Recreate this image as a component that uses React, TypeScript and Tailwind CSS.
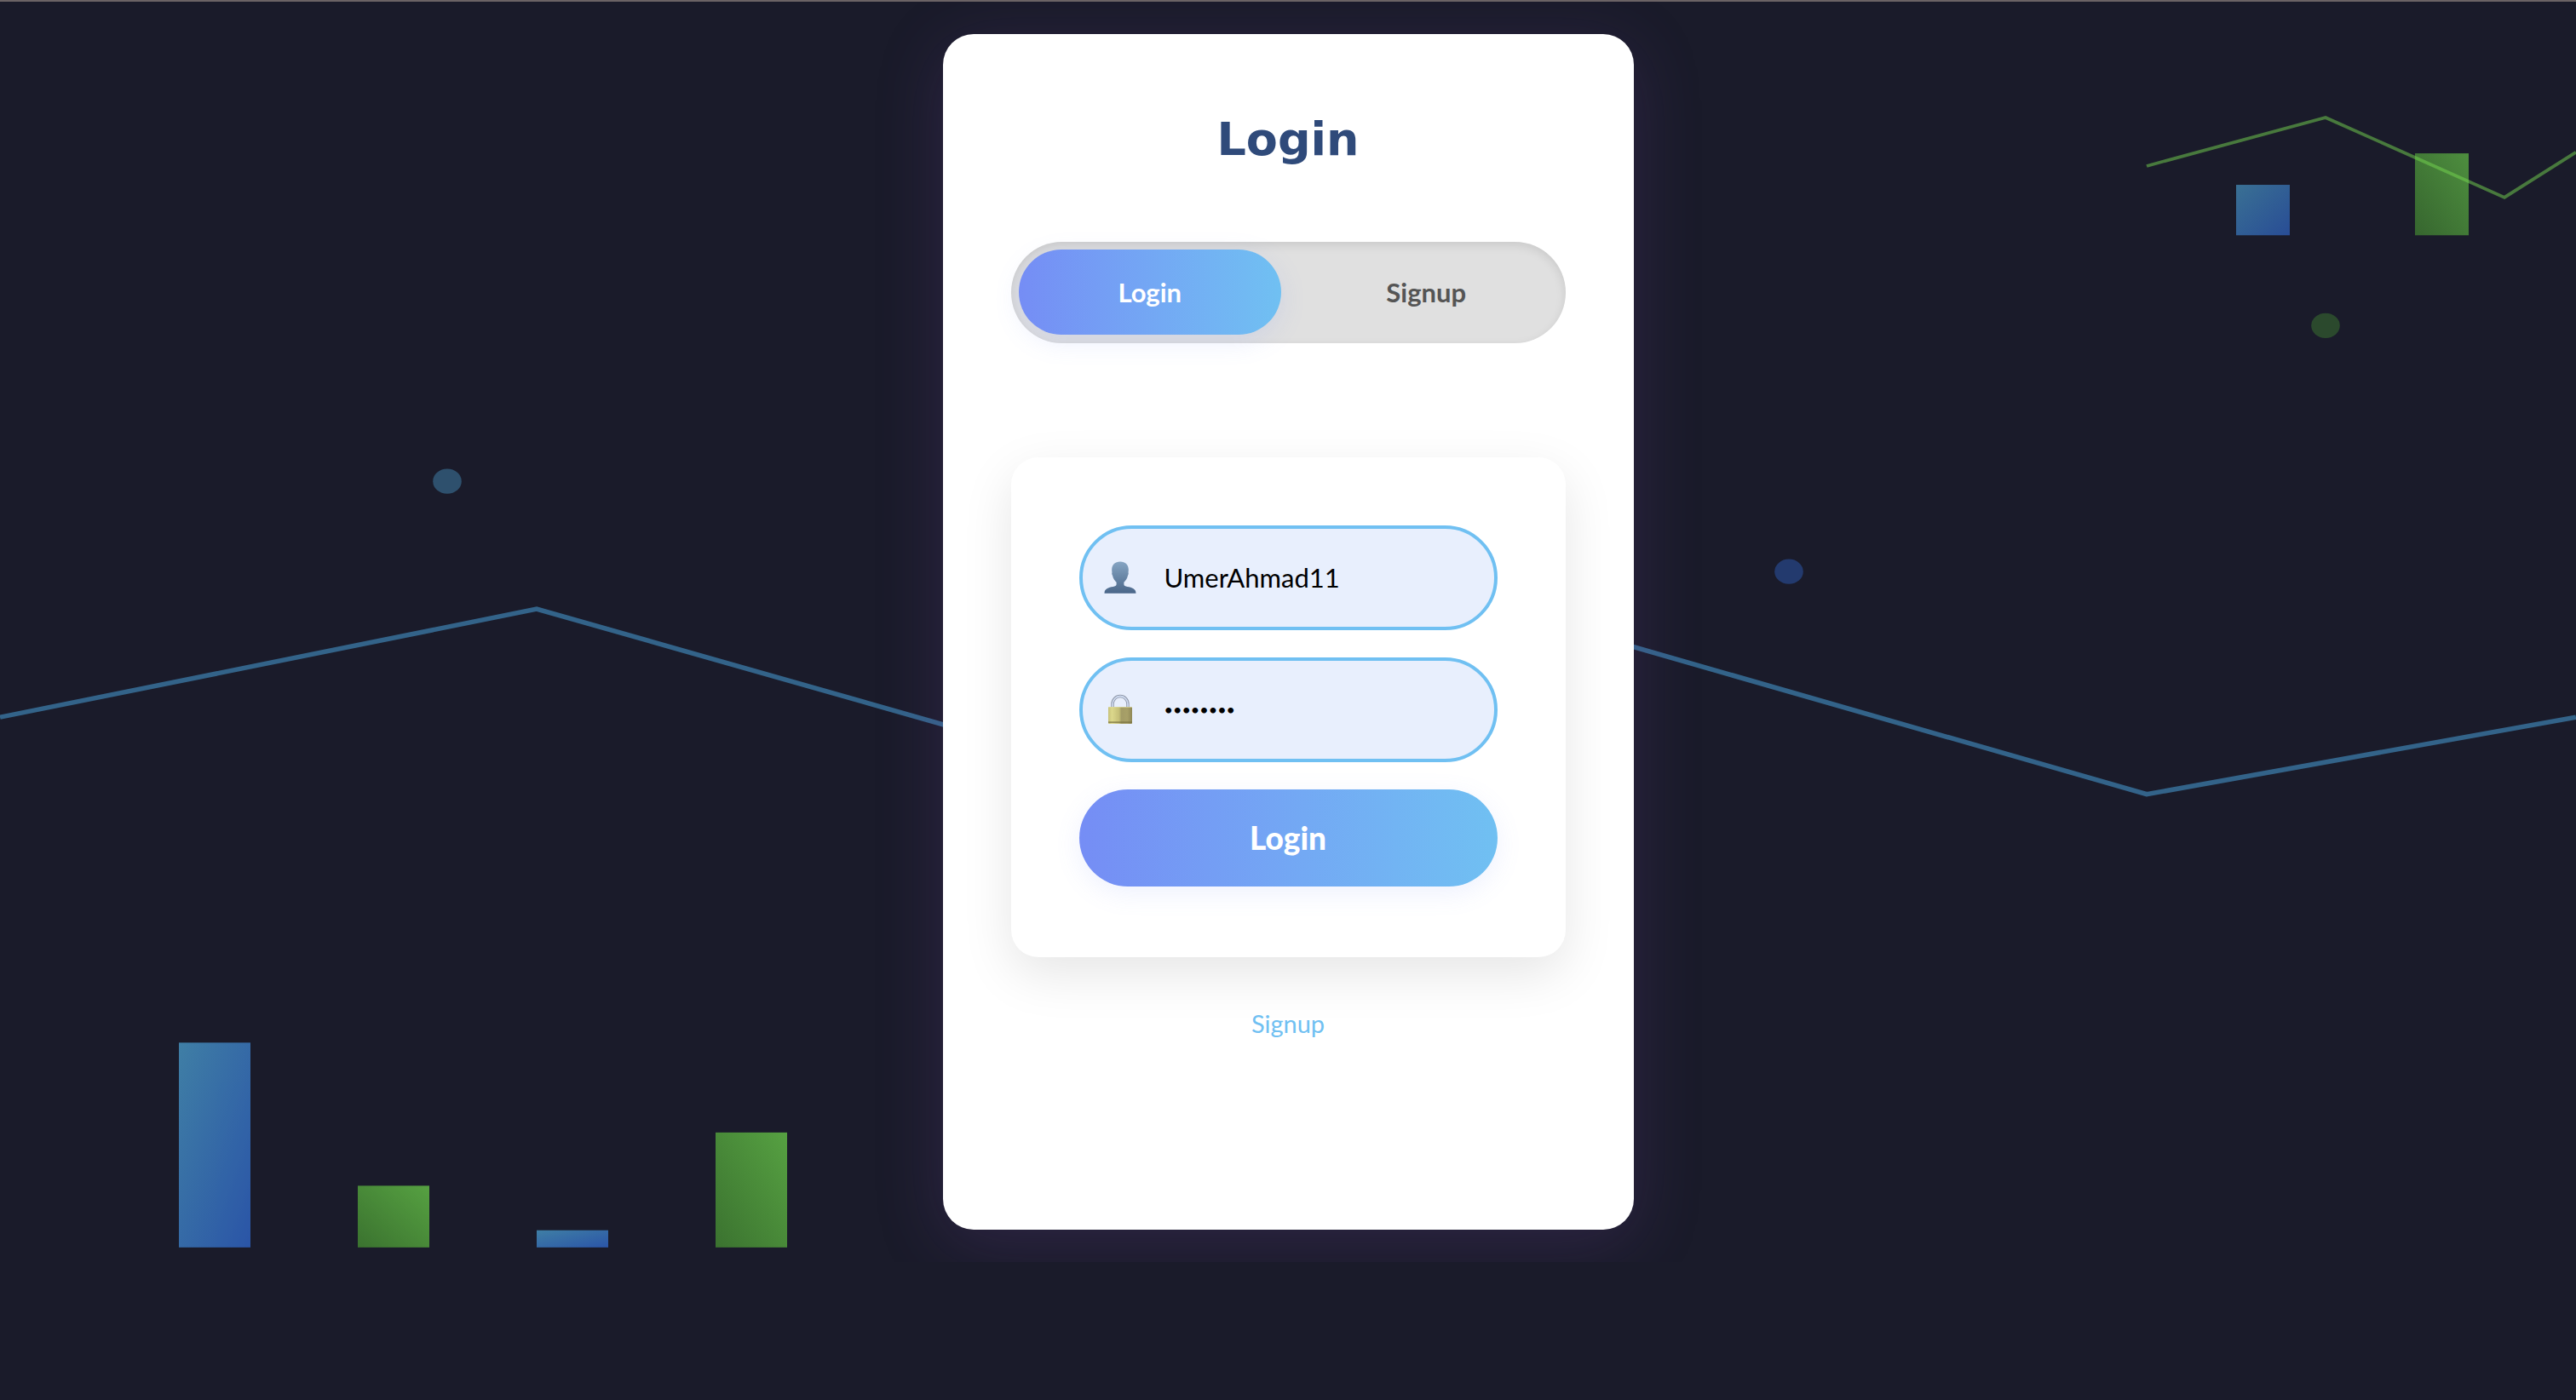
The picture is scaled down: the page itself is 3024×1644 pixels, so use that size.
import { useState } from "react";

const tabs = ["Login", "Signup"];

function Backdrop() {
  return (
    <svg
      className="absolute inset-0 h-full w-full"
      viewBox="0 0 1440 898"
      preserveAspectRatio="none"
      aria-hidden="true"
    >
      <defs>
        <linearGradient id="blueBar" x1="0" y1="0" x2="1" y2="1">
          <stop offset="0" stopColor="#4fa9da" />
          <stop offset="1" stopColor="#326edd" />
        </linearGradient>
        <linearGradient id="greenBar" x1="0" y1="1" x2="1" y2="0">
          <stop offset="0" stopColor="#499832" />
          <stop offset="1" stopColor="#70da4c" />
        </linearGradient>
      </defs>
      <g opacity="0.7">
        <rect x="100" y="668.5" width="40" height="131.5" fill="url(#blueBar)" />
        <rect x="200" y="760.4" width="40" height="39.6" fill="url(#greenBar)" />
        <rect x="300" y="789" width="40" height="11" fill="url(#blueBar)" />
        <rect x="400" y="726.2" width="40" height="73.8" fill="url(#greenBar)" />
      </g>
      <g opacity="0.6">
        <rect x="1250" y="117.6" width="30" height="32.4" fill="url(#blueBar)" />
        <rect x="1350" y="97.4" width="30" height="52.6" fill="url(#greenBar)" />
      </g>
      <path
        d="M0 459.5 L300 390 L600 488 L900 410 L1200 509 L1440 459.5"
        fill="none"
        stroke="#4cabe8"
        strokeWidth="3"
        opacity="0.5"
      />
      <path
        d="M1200 105.5 L1300 74.4 L1400 125.7 L1440 96.6"
        fill="none"
        stroke="#76d74f"
        strokeWidth="2"
        opacity="0.5"
      />
      <circle cx="250" cy="308" r="8" fill="#4fa9da" opacity="0.38" />
      <circle cx="1000" cy="366" r="8" fill="#326edd" opacity="0.38" />
      <circle cx="1300" cy="208" r="8" fill="#469631" opacity="0.38" />
    </svg>
  );
}

function UserIcon() {
  return (
    <svg className="h-10 w-10" viewBox="0 0 40 40" aria-hidden="true">
      <defs>
        <linearGradient id="bust" x1="0" y1="0" x2="0" y2="1">
          <stop offset="0" stopColor="#86a5c3" />
          <stop offset="1" stopColor="#4a6689" />
        </linearGradient>
      </defs>
      <path
        fill="url(#bust)"
        d="M20 .5c6 0 9.800 3.800 9.800 9.500 0 1.300-.1 2.300-.3 3.300.5.900.3 2.200-.5 3.400-.9 4-2.600 6.300-4.600 8v2.600c0 1.400 1.600 2.300 4 2.800 5.600.900 10.100 2.300 10.100 7.700h-37c0-5.400 4.500-6.800 10.100-7.700 2.400-.5 4-1.400 4-2.800v-2.600c-2-1.700-3.700-4-4.600-8-.8-1.200-1-2.500-.5-3.400-.2-1-.3-2-.3-3.300 0-5.700 3.800-9.500 9.800-9.500z"
      />
    </svg>
  );
}

function LockIcon() {
  return (
    <svg className="h-10 w-10" viewBox="0 0 40 40" aria-hidden="true">
      <defs>
        <linearGradient id="brass" x1="0" y1="0" x2="1" y2="0">
          <stop offset="0" stopColor="#c6c079" />
          <stop offset="0.15" stopColor="#dcd88c" />
          <stop offset="0.45" stopColor="#c5bf78" />
          <stop offset="0.55" stopColor="#a39c66" />
          <stop offset="0.8" stopColor="#a8a068" />
          <stop offset="1" stopColor="#8f8856" />
        </linearGradient>
      </defs>
      <path
        d="M11 18V13a9 9.500 0 0 1 18 0v5"
        fill="none"
        stroke="#8b93a3"
        strokeWidth="3.400"
      />
      <path
        d="M11 18V13a9 9.500 0 0 1 18 0v5"
        fill="none"
        stroke="#ccd8ee"
        strokeWidth="1.800"
      />
      <rect x="6" y="16" width="28" height="20" rx="1" fill="url(#brass)" />
      <rect x="6" y="33.500" width="28" height="1.200" fill="#77703f" />
      <rect x="6" y="16" width="28" height="1" fill="#dcd8a0" opacity="0.7" />
    </svg>
  );
}

export default function App() {
  const [mode, setMode] = useState("Login");
  const [user, setUser] = useState("UmerAhmad11");
  const [password, setPassword] = useState("password");

  return (
    <div className="relative min-h-screen overflow-hidden border-t-2 border-[#6b6365] bg-[#1a1b2a] font-['Lato',sans-serif]">
      <Backdrop />
      <div className="relative flex justify-center overflow-hidden py-[38px]">
        <main className="w-[811px] max-w-full rounded-[36px] bg-white px-20 pt-20 pb-[220px] shadow-[0_16px_80px_rgba(118,75,162,0.22)]">
          <h1 className="mb-[76px] text-center font-['DejaVu_Sans',sans-serif] text-[54px] leading-[88px] font-bold text-[#2f4a7a]">
            Login
          </h1>

          <div
            role="tablist"
            className="grid grid-cols-2 gap-4 rounded-full bg-[#e0e0e0] px-[9px] pt-[9px] pb-[10px] shadow-[inset_0_4px_12px_rgba(0,0,0,0.1)]"
          >
            {tabs.map((tab) => (
              <button
                key={tab}
                type="button"
                role="tab"
                aria-selected={mode === tab}
                onClick={() => setMode(tab)}
                className={
                  mode === tab
                    ? "h-[100px] rounded-full bg-linear-to-r from-[#758df5] to-[#70c0f2] text-[31px] font-bold text-white shadow-[0_8px_30px_rgba(117,141,245,0.15)]"
                    : "h-[100px] rounded-full text-[31px] font-bold text-[#555555]"
                }
              >
                {tab}
              </button>
            ))}
          </div>

          <form
            onSubmit={(event) => event.preventDefault()}
            className="mt-[134px] flex flex-col gap-8 rounded-[32px] bg-white px-20 pt-20 pb-[83px] shadow-[0_20px_60px_rgba(0,0,0,0.1)]"
          >
            <label className="flex h-[123px] items-center gap-8 rounded-full border-4 border-[#70c0f2] bg-[#e8effd] pr-8 pl-6">
              <UserIcon />
              <input
                type="text"
                aria-label="Username"
                value={user}
                onChange={(event) => setUser(event.target.value)}
                className="min-w-0 flex-1 bg-transparent text-[31px] text-black outline-none"
              />
            </label>
            <label className="flex h-[123px] items-center gap-8 rounded-full border-4 border-[#70c0f2] bg-[#e8effd] pr-8 pl-6">
              <LockIcon />
              <input
                type="password"
                aria-label="Password"
                value={password}
                onChange={(event) => setPassword(event.target.value)}
                className="min-w-0 flex-1 bg-transparent text-[18px] text-black outline-none"
              />
            </label>
            <button
              type="submit"
              className="h-[114px] rounded-full bg-linear-to-r from-[#758df5] to-[#70c0f2] text-[37px] font-black text-white shadow-[0_8px_30px_rgba(117,141,245,0.12)]"
            >
              Login
            </button>
          </form>

          <p className="mt-14 text-center text-[29px] leading-[44px]">
            <a href="#signup" className="text-[#70c0f2]">
              Signup
            </a>
          </p>
        </main>
      </div>
    </div>
  );
}
